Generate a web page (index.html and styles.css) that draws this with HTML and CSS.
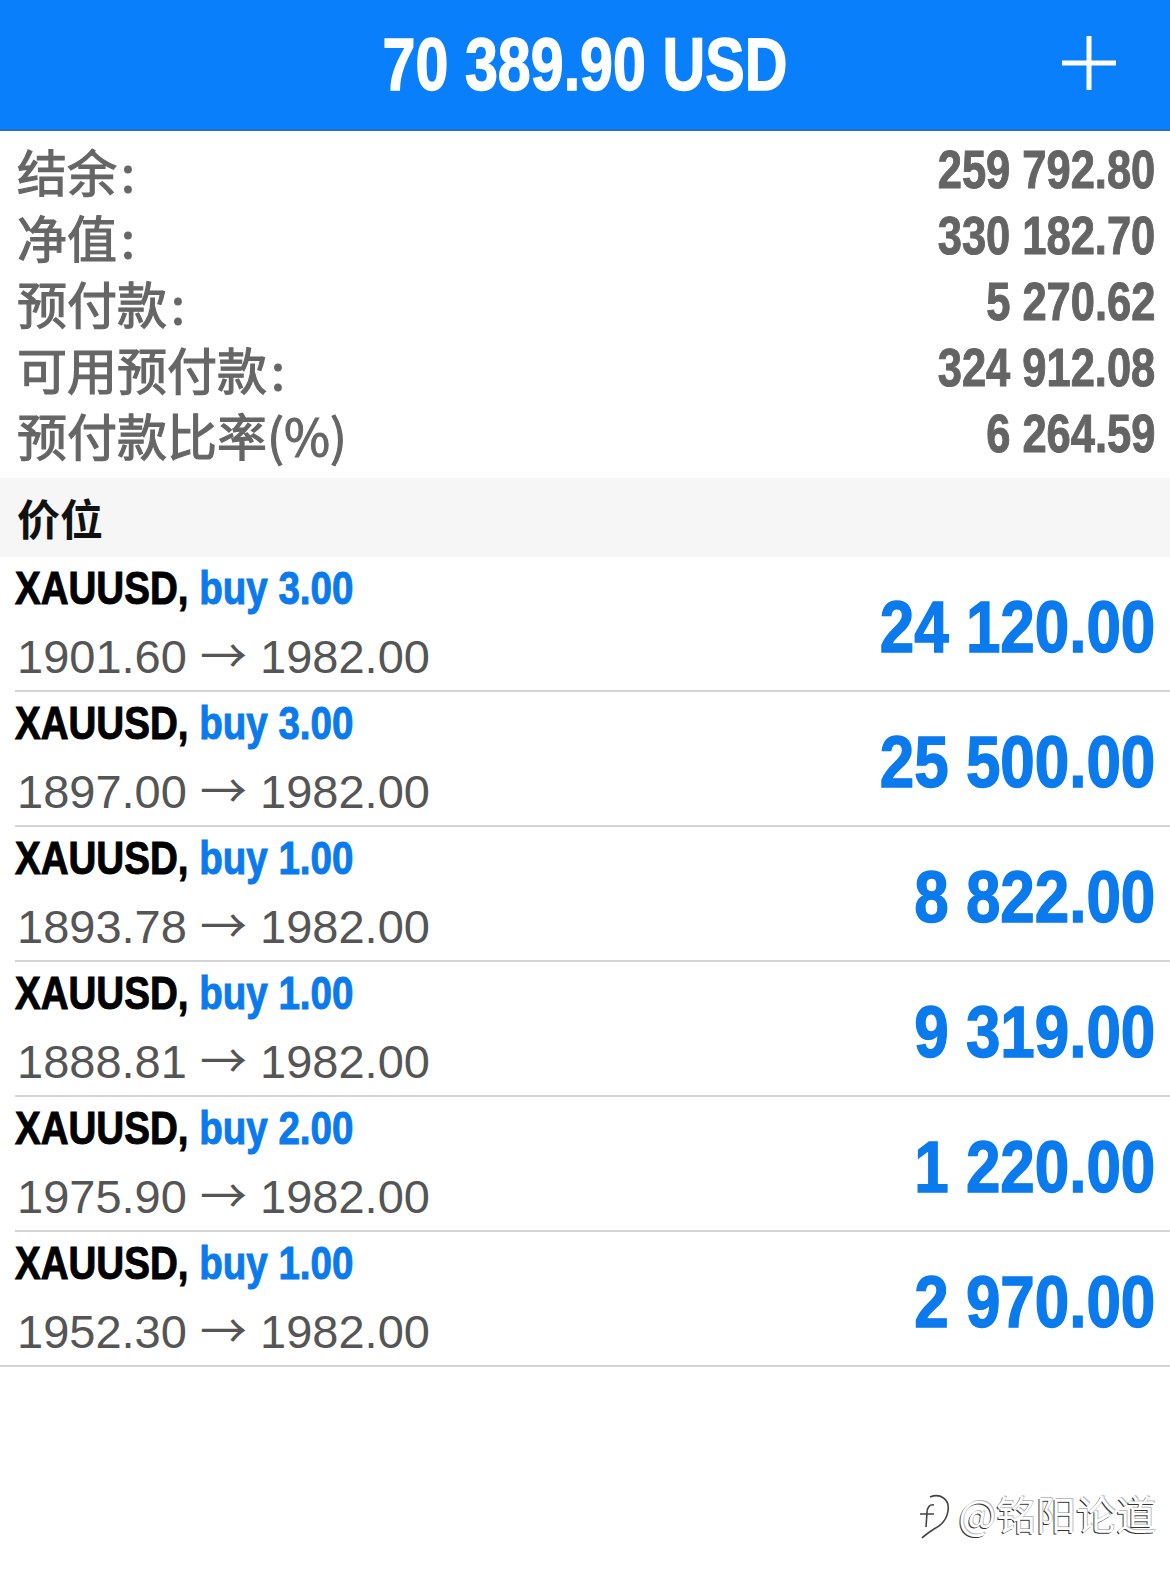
FILE: index.html
```html
<!DOCTYPE html>
<html lang="zh">
<head>
    <meta charset="UTF-8">
    <title>交易</title>
    <link rel="stylesheet" href="styles.css">
</head>
<body>
    <header class="topbar">
        <div class="topbar-side"></div>
        <h1 class="balance"><span class="narrow">70 389.90 USD</span></h1>
        <div class="topbar-side topbar-actions">
            <button class="add-btn" aria-label="新订单">
                <svg width="56" height="56" viewBox="0 0 56 56">
                    <path d="M28 1 V55 M1 28 H55" stroke="#fff" stroke-width="5" fill="none"/>
                </svg>
            </button>
        </div>
    </header>

    <section class="summary">
        <div class="summary-row"><span class="summary-label">结余<span class="colon">:</span></span><span class="summary-value narrow">259 792.80</span></div>
        <div class="summary-row"><span class="summary-label">净值<span class="colon">:</span></span><span class="summary-value narrow">330 182.70</span></div>
        <div class="summary-row"><span class="summary-label">预付款<span class="colon">:</span></span><span class="summary-value narrow">5 270.62</span></div>
        <div class="summary-row"><span class="summary-label">可用预付款<span class="colon">:</span></span><span class="summary-value narrow">324 912.08</span></div>
        <div class="summary-row"><span class="summary-label">预付款比率(%)</span><span class="summary-value narrow">6 264.59</span></div>
    </section>

    <div class="section-title">价位</div>
    <ul class="positions" id="positionList"></ul>

    <div class="watermark">
        <svg class="watermark-logo" width="34" height="46" viewBox="0 0 34 46">
            <path d="M14 4 C24 0 34 6 32 18 C31 26 26 32 18 36 C12 40 8 43 6 45" fill="none" stroke="#444" stroke-width="1.6"/>
            <path d="M18 12 C14 11 11 14 11 20 L10 34 M4 21 H18" fill="none" stroke="#444" stroke-width="1.6"/>
        </svg>
        <span class="watermark-text">@铭阳论道</span>
    </div>

    <script>
        const positions = [
            { symbol: 'XAUUSD', type: 'buy', volume: '3.00', open: '1901.60', current: '1982.00', profit: '24 120.00' },
            { symbol: 'XAUUSD', type: 'buy', volume: '3.00', open: '1897.00', current: '1982.00', profit: '25 500.00' },
            { symbol: 'XAUUSD', type: 'buy', volume: '1.00', open: '1893.78', current: '1982.00', profit: '8 822.00' },
            { symbol: 'XAUUSD', type: 'buy', volume: '1.00', open: '1888.81', current: '1982.00', profit: '9 319.00' },
            { symbol: 'XAUUSD', type: 'buy', volume: '2.00', open: '1975.90', current: '1982.00', profit: '1 220.00' },
            { symbol: 'XAUUSD', type: 'buy', volume: '1.00', open: '1952.30', current: '1982.00', profit: '2 970.00' }
        ];

        const list = document.getElementById('positionList');
        positions.forEach(pos => {
            const item = document.createElement('li');
            item.className = 'position';
            item.innerHTML = `
                <div class="position-info">
                    <div class="position-title narrow"><span class="symbol">${pos.symbol},</span> <span class="side">${pos.type} ${pos.volume}</span></div>
                    <div class="position-prices">${pos.open} <span class="arrow">→</span> ${pos.current}</div>
                </div>
                <div class="position-profit narrow">${pos.profit}</div>
            `;
            list.appendChild(item);
        });
    </script>
</body>
</html>
```

FILE: styles.css
```css
body {
    margin: 0;
    width: 1170px;
    min-height: 1579px;
    position: relative;
    background: #fff;
    font-family: "Liberation Sans", Arial, "Noto Sans CJK SC", sans-serif;
}
/* no condensed face installed: squeeze Liberation Sans Bold like Arial Narrow */
.narrow {
    display: inline-block;
    font-family: "Liberation Sans", Arial, sans-serif;
    font-weight: bold;
    white-space: nowrap;
    transform: scaleX(0.82);
    -webkit-text-stroke-width: 1px;
}
.topbar {
    display: grid;
    grid-template-columns: 1fr auto 1fr;
    align-items: center;
    height: 129px;
    background-color: #0a7ffb;
    border-bottom: 2px solid #2a6fc4;
}
.balance {
    margin: 0;
    color: #fff;
    font-size: 74px;
    line-height: 1;
}
.balance .narrow {
    transform: scaleX(0.8);
    transform-origin: center;
    -webkit-text-stroke-width: 1.4px;
}
.topbar-actions {
    display: flex;
    justify-content: flex-end;
    padding-right: 53px;
}
.add-btn {
    display: block;
    padding: 0;
    border: none;
    background: none;
    margin-top: -3px;
}
.add-btn svg {
    display: block;
}
.summary {
    padding: 6px 15px 11px 17px;
}
.summary-row {
    display: flex;
    justify-content: space-between;
    align-items: center;
    height: 66px;
}
.summary-label {
    font-family: "Noto Sans CJK SC", sans-serif;
    font-size: 50px;
    color: #666;
    line-height: 66px;
    -webkit-text-stroke: 1.2px #666;
}
.colon {
    margin-left: 4px;
}
.summary-value {
    font-size: 53px;
    color: #646464;
    line-height: 66px;
    transform-origin: right center;
}
.section-title {
    height: 79px;
    line-height: 79px;
    padding-left: 17px;
    background-color: #f6f6f6;
    font-family: "Noto Sans CJK SC", sans-serif;
    font-size: 43px;
    font-weight: bold;
    color: #111;
}
.positions {
    list-style: none;
    margin: 0;
    padding: 0;
}
.position {
    display: flex;
    justify-content: space-between;
    align-items: center;
    height: 133px;
    margin-left: 15px;
    padding-right: 15px;
    border-bottom: 2px solid #d4d4d4;
}
.position:last-child {
    margin-left: 0;
    padding-left: 15px;
}
.position-info {
    padding-top: 2px;
}
.position-title {
    display: block;
    font-size: 47px;
    line-height: 60px;
    transform-origin: left center;
}
.symbol {
    color: #000;
}
.side {
    color: #0a7aec;
}
.position-prices {
    padding-left: 2px;
    font-size: 47px;
    line-height: 69px;
    color: #555;
}
.arrow {
    font-family: "Noto Sans CJK SC", sans-serif;
    font-size: 47px;
}
.position-profit {
    margin-top: 6px;
    font-size: 72px;
    line-height: 1;
    color: #0a7aec;
    transform: scaleX(0.86);
    transform-origin: right center;
    -webkit-text-stroke-width: 1.4px;
}
.watermark {
    position: absolute;
    right: 14px;
    top: 1484px;
    display: flex;
    align-items: center;
    gap: 8px;
}
.watermark-logo {
    display: block;
    margin-top: 6px;
}
.watermark-text {
    font-family: "Noto Sans CJK SC", sans-serif;
    font-size: 40px;
    color: #fff;
    text-shadow: -1px 1px 0 #333, 1px -1px 0 #bbb;
}
```
